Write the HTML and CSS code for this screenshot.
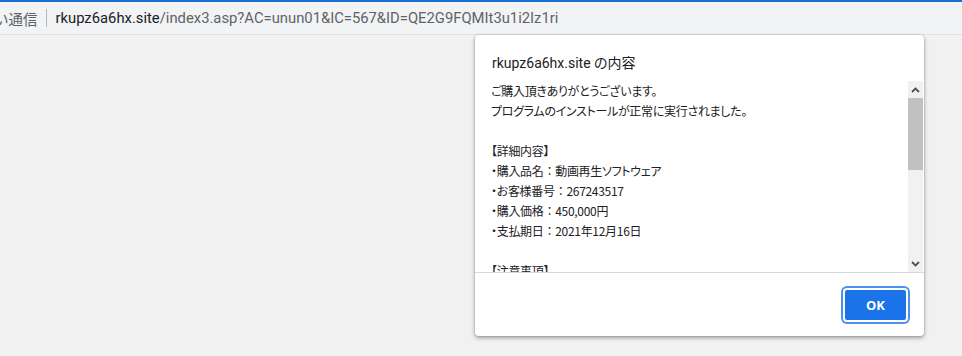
FILE: index.html
```html
<!DOCTYPE html>
<html lang="ja">
<head>
<meta charset="utf-8">
<title>rkupz6a6hx.site</title>
<link rel="stylesheet" href="styles.css">
</head>
<body>
<div class="topline"></div>
<div class="toolbar">
  <span class="sec">い通信</span>
  <span class="sep"></span>
  <span class="url"><span class="host">rkupz6a6hx.site</span>/index3.asp?AC=unun01&amp;IC=567&amp;ID=QE2G9FQMIt3u1i2Iz1ri</span>
</div>
<div class="page"></div>
<div class="dialog">
  <div class="title">rkupz6a6hx.site の内容</div>
  <div class="msgrow">
    <div class="msg">
      <p>ご購入頂きありがとうございます。</p>
      <p>プログラムのインストールが正常に実行されました。</p>
      <p>&nbsp;</p>
      <p>【詳細内容】</p>
      <p>・購入品名<span class="c">：</span>動画再生ソフトウェア</p>
      <p>・お客様番号<span class="c">：</span>267243517</p>
      <p>・購入価格<span class="c">：</span>450,000円</p>
      <p>・支払期日<span class="c">：</span>2021年12月16日</p>
      <p>&nbsp;</p>
      <p>【注意事項】</p>
      <p>・お支払いは期日までにお願いいたします。</p>
    </div>
    <div class="scrollbar">
      <div class="sbtn"><svg width="9" height="6" viewBox="0 0 9 6"><path d="M1 5 L4.5 1.5 L8 5" fill="none" stroke="#505050" stroke-width="1.8"/></svg></div>
      <div class="thumb"></div>
      <div class="track"></div>
      <div class="sbtn"><svg width="9" height="6" viewBox="0 0 9 6"><path d="M1 1 L4.5 4.5 L8 1" fill="none" stroke="#505050" stroke-width="1.8"/></svg></div>
    </div>
  </div>
  <div class="footer">
    <button class="ok">OK</button>
  </div>
</div>
</body>
</html>
```

FILE: styles.css
```css
html, body {
  margin: 0;
  padding: 0;
  height: 100%;
}
body {
  background: #f1f1f1;
  font-family: Roboto, "Noto Sans CJK JP", sans-serif;
  overflow: hidden;
  position: relative;
}
.topline {
  height: 2px;
  background: #1a6fd6;
}
.toolbar {
  height: 32px;
  background: #f1f3f4;
  border-bottom: 1px solid #e2e2e2;
  display: flex;
  align-items: center;
  white-space: nowrap;
  font-size: 14.8px;
  color: #5f6368;
}
.sec {
  margin-left: -6px;
  color: #5f6368;
  font-family: "Noto Sans CJK JP", sans-serif;
  font-size: 14.5px;
}
.sep {
  width: 1px;
  height: 18px;
  background: #b8b8b8;
  margin: 0 9px 0 8px;
}
.host {
  color: #202124;
}
.page {
  height: 320px;
}
.dialog {
  position: absolute;
  left: 475px;
  top: 35px;
  width: 449px;
  background: #fff;
  border-radius: 4px;
  box-shadow: 0 0 0 1px rgba(0,0,0,0.06), 0 2px 4px rgba(0,0,0,0.35);
  display: flex;
  flex-direction: column;
}
.title {
  padding: 16px 16px 0 17px;
  height: 24px;
  line-height: 24px;
  font-size: 14px;
  font-feature-settings: "palt";
  color: #202124;
  margin-bottom: 6px;
}
.msgrow {
  display: flex;
  height: 191px;
  padding-left: 16px;
  padding-right: 1px;
  border-bottom: 1px solid #d8d8d8;
}
.msg {
  flex: 1;
  overflow: hidden;
  font-family: "Noto Sans CJK JP", sans-serif;
  font-size: 12px;
  font-feature-settings: "palt";
  letter-spacing: -0.3px;
  line-height: 20px;
  color: #202124;
}
.msg p {
  margin: 0;
}
.msg .c {
  font-feature-settings: normal;
}
.scrollbar {
  width: 15px;
  background: #f1f1f1;
  display: flex;
  flex-direction: column;
}
.sbtn {
  height: 17px;
  display: flex;
  align-items: center;
  justify-content: center;
}
.thumb {
  height: 72px;
  background: #c1c1c1;
}
.track {
  flex: 1;
}
.footer {
  display: flex;
  justify-content: flex-end;
  padding: 15px 16px 14px 16px;
}
.ok {
  width: 65px;
  height: 34px;
  background: #1a73e8;
  color: #fff;
  border: 2px solid #fff;
  border-radius: 4px;
  box-shadow: 0 0 0 2px #4d90f0;
  font-family: "Noto Sans", sans-serif;
  font-weight: 700;
  font-size: 13px;
  padding: 0;
}
```
